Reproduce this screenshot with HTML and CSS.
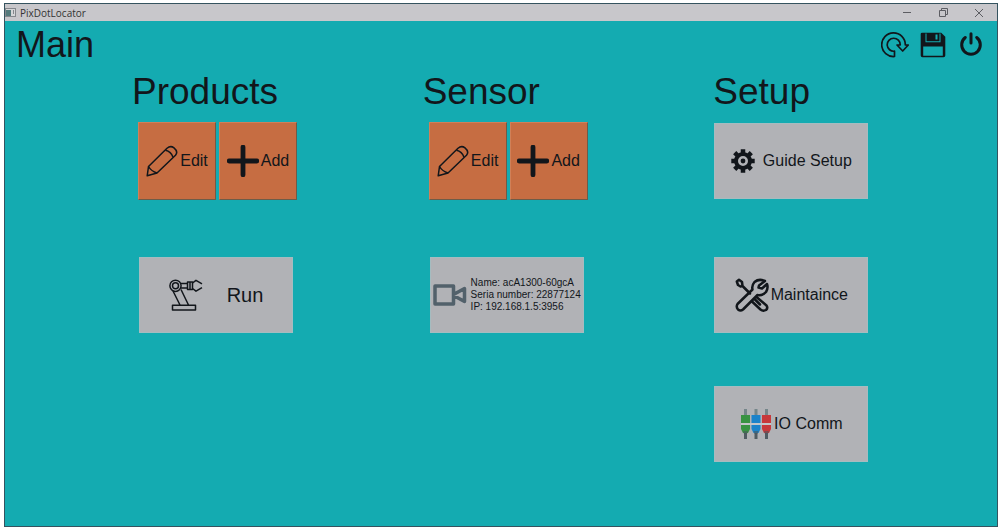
FILE: index.html
```html
<!DOCTYPE html>
<html lang="en">
<head>
  <meta charset="UTF-8">
  <meta name="viewport" content="width=device-width, initial-scale=1.0">
  <title>PixDotLocator</title>
  <link rel="stylesheet" href="styles.css">
</head>
<body>
  <!-- shared icons -->
  <svg class="defs" aria-hidden="true">
    <symbol id="pencil" viewBox="0 0 32 32">
      <g fill="none" stroke="currentColor" stroke-width="1.5" stroke-linejoin="round">
        <path d="M1.2 30.8 2.500 21.500 21 3.3Q24.5 .2 28 2.8Q32.500 6.500 29.500 10.200L11 28Z"/>
        <path d="M2.500 21.500Q5 26 11 28M19.500 5.300Q25 6.500 27 12.200"/>
      </g>
    </symbol>
    <symbol id="plus" viewBox="0 0 30 30">
      <path d="M15 2V28M2 15H28" fill="none" stroke="currentColor" stroke-width="4.500" stroke-linecap="round"/>
    </symbol>
  </svg>

  <div class="window">
    <header class="titlebar">
      <svg class="app-icon" viewBox="0 0 11 9">
        <rect x=".5" y=".5" width="10" height="8" fill="#d5d6d8" stroke="#85888d"/>
        <rect x="1" y="2" width="5" height="6" fill="#557a7c"/>
        <path d="M8.500 2V6" stroke="#85888d"/>
      </svg>
      <span class="app-name">PixDotLocator</span>
      <button class="win-btn" type="button" aria-label="Minimize">
        <svg viewBox="0 0 10 10"><path d="M1 4.500H9"/></svg>
      </button>
      <button class="win-btn" type="button" aria-label="Restore">
        <svg viewBox="0 0 10 10"><path d="M1.500 2.500H7.500V8.500H1.500ZM3.500 2.500V.5H9.500V6.500H7.500"/></svg>
      </button>
      <button class="win-btn" type="button" aria-label="Close">
        <svg viewBox="0 0 10 10"><path d="M1 1 9 9M9 1 1 9"/></svg>
      </button>
    </header>

    <div class="toolbar">
      <h1>Main</h1>
      <div class="tools">
        <button class="tool" type="button" aria-label="Refresh">
          <svg viewBox="0 0 28 26">
            <path d="M13.500 24.500A11.800 11.800 0 1 1 24.300 13H27.300L21.700 19 16 13H19.200A6.500 6.500 0 1 0 13.500 19.200Z" fill="none" stroke="currentColor" stroke-width="1.700" stroke-linejoin="round"/>
          </svg>
        </button>
        <button class="tool" type="button" aria-label="Save">
          <svg viewBox="0 0 28 26">
            <path fill="currentColor" fill-rule="evenodd" d="M3 .7H22.200L26.300 4.800V23.500Q26.300 25.300 24.500 25.300H3.500Q1.700 25.300 1.700 23.500V2Q1.700 .7 3 .7ZM4.200 14.500V23.700H23.800V14.500Z"/>
            <path fill="#14abb1" d="M6.500 1.500H7.500V9.300H20.500V1.500H21.500V10.300H6.500ZM16.500 2.500H18.500V7.500H16.500Z"/>
          </svg>
        </button>
        <button class="tool" type="button" aria-label="Power">
          <svg viewBox="0 0 28 26">
            <path d="M8.300 5.500A9.300 9.300 0 1 0 19.700 5.500M14 1.800V11" fill="none" stroke="currentColor" stroke-width="3" stroke-linecap="round"/>
          </svg>
        </button>
      </div>
    </div>

    <main class="columns">
      <section class="column">
        <h2>Products</h2>
        <div class="pair">
          <button class="btn orange" type="button"><svg class="icon"><use href="#pencil"/></svg>Edit</button>
          <button class="btn orange" type="button"><svg class="icon"><use href="#plus"/></svg>Add</button>
        </div>
        <button class="btn gray run" type="button">
          <svg class="icon-robot" viewBox="0 0 34 32">
            <g fill="none" stroke="currentColor" stroke-width="1.500" stroke-linejoin="round">
              <circle cx="6.500" cy="6.800" r="5.600"/>
              <circle cx="6.500" cy="6.800" r="3"/>
              <path d="M12 4.500H18.500M12 9H18.500M18.500 3H23.500V10.500H18.500ZM21 3V10.500"/>
              <path d="M23.500 4 27 1.300 33 4.800M23.500 9.500 27 12.200 33 8.700"/>
              <path d="M4 12 11 26M12 10.500 19.500 26M3.500 26.300H26.500V31H3.500Z"/>
            </g>
          </svg>
          Run
        </button>
      </section>

      <section class="column">
        <h2>Sensor</h2>
        <div class="pair">
          <button class="btn orange" type="button"><svg class="icon"><use href="#pencil"/></svg>Edit</button>
          <button class="btn orange" type="button"><svg class="icon"><use href="#plus"/></svg>Add</button>
        </div>
        <button class="btn gray camera" type="button">
          <svg class="icon-camera" viewBox="0 0 34 22">
            <path d="M2 2H20.500V20H2ZM20.500 10.500 31.500 4.500V17.500L20.500 11.500" fill="none" stroke="#52616b" stroke-width="3.500" stroke-linejoin="round"/>
          </svg>
          <span>Name: acA1300-60gcA<br>Seria number: 22877124<br>IP: 192.168.1.5:3956</span>
        </button>
      </section>

      <section class="column setup">
        <h2>Setup</h2>
        <button class="btn gray guide" type="button">
          <svg class="icon-gear" viewBox="0 0 24 24">
            <circle cx="12" cy="12" r="7" fill="none" stroke="currentColor" stroke-width="4"/>
            <circle cx="12" cy="12" r="2.400" fill="currentColor"/>
            <g stroke="currentColor" stroke-width="4.500">
              <path d="M12 .3V5M12 19V23.700M.3 12H5M19 12H23.700"/>
              <path d="M3.700 3.700 7 7M17 17 20.300 20.300M3.700 20.300 7 17M17 7 20.300 3.700"/>
            </g>
          </svg>
          Guide Setup
        </button>
        <button class="btn gray" type="button">
          <svg class="icon-tools" viewBox="0 0 34 34">
            <g fill="none" stroke="currentColor" stroke-width="2.500" stroke-linejoin="round" stroke-linecap="round">
              <path d="M1.800 3.500 4 1.800 7 4 7.500 8 5.500 8.500 3 7ZM7.500 8 15 15.500"/>
              <path d="M21.500 19 31.500 27.500Q33.200 30 31 32Q28 33.500 25.500 31.500L17 23.500M20 21.500 25 26.500"/>
              <path d="M30 3Q24 .3 19.500 4Q16.500 7.500 17.500 11.500L2.500 26Q.8 29 3 31.500Q5.500 33.500 8 31.500L22.500 17Q27.500 18 31 14Q33.500 10 32 6L27 10.500 23.500 9.500 24 7.500Z"/>
            </g>
          </svg>
          Maintaince
        </button>
        <button class="btn gray" type="button">
          <svg class="icon-io" viewBox="0 0 32 32">
            <path d="M5.500 1V7M16 1V7M26.500 1V7" stroke="#75868a" stroke-width="3"/>
            <path d="M5.500 24V31M16 24V31M26.500 24V31" stroke="#505b62" stroke-width="3"/>
            <path d="M1 7H10V15H1ZM1 17H10V21L8 25H3L1 21Z" fill="#389342"/>
            <path d="M11.500 7H20.500V15H11.500ZM11.500 17H20.500V21L18.500 25H13.500L11.500 21Z" fill="#1c83ca"/>
            <path d="M22 7H31V15H22ZM22 17H31V21L29 25H24L22 21Z" fill="#c7383b"/>
            <path d="M3 23H8L7 26H4ZM13.500 23H18.500L17.500 26H14.500ZM24 23H29L28 26H25Z" fill="#4b565e" opacity=".6"/>
            <path d="M1 16H31" stroke="#d8dadd"/>
          </svg>
          IO Comm
        </button>
      </section>
    </main>
  </div>
</body>
</html>
```
FILE: styles.css
```css
* {
  box-sizing: border-box;
}
body {
  margin: 0;
  padding: 3px 4px;
  background: #fff;
  color: #12161b;
  font-family: "Liberation Sans", Arial, sans-serif;
}
button {
  margin: 0;
  padding: 0;
  border: none;
  background: none;
  color: inherit;
  font: inherit;
  cursor: pointer;
}
.defs {
  display: none;
}
.window {
  min-height: calc(100vh - 6px);
  border: 1px solid #35535f;
  background: #14abb1;
}

/* title bar */
.titlebar {
  display: flex;
  align-items: center;
  height: 17px;
  background: #c8c7cb;
}
.app-icon {
  width: 11px;
  height: 9px;
}
.app-name {
  flex: 1;
  margin-left: 4px;
  color: #333;
  font-family: "Open Sans", sans-serif;
  font-size: 10px;
  line-height: 16px;
}
.win-btn {
  display: flex;
  align-items: center;
  justify-content: center;
  width: 36px;
  height: 16px;
}
.win-btn svg {
  width: 10px;
  height: 10px;
  fill: none;
  stroke: #5c5d62;
}

/* page header */
.toolbar {
  display: flex;
  align-items: center;
  justify-content: space-between;
  height: 48px;
  padding: 0 12px 0 11px;
}
h1,
h2 {
  margin: 0;
  font-weight: normal;
}
h1 {
  font-size: 36px;
}
.tools {
  display: flex;
  gap: 10px;
}
.tool svg {
  display: block;
  width: 28px;
  height: 26px;
}

/* button columns */
.columns {
  display: grid;
  grid-template-columns: repeat(3, 1fr);
  padding-left: 120px;
}
.column {
  display: flex;
  flex-direction: column;
  align-items: flex-start;
  padding-left: 14px;
}
.column h2 {
  margin: 0 0 7px -7px;
  font-size: 37px;
  line-height: 46px;
}
.pair {
  display: flex;
  gap: 3px;
  margin-left: -1px;
}
.btn {
  display: flex;
  align-items: center;
  justify-content: center;
  gap: 2px;
  font-size: 16px;
}
.orange {
  width: 78px;
  height: 78px;
  border: 1px solid #d08058;
  border-right-color: #6d5c48;
  border-bottom-color: #6d5c48;
  background: #c66d42;
}
.gray {
  width: 154px;
  height: 76px;
  border: 1px solid #a5bcc0;
  background: #b1b2b6;
}
.icon {
  width: 32px;
  height: 32px;
}
.run {
  gap: 24px;
  margin-top: 57px;
  font-size: 20px;
}
.icon-robot {
  width: 34px;
  height: 32px;
}
.camera {
  gap: 4px;
  margin-top: 57px;
  font-size: 10px;
  line-height: 12px;
  text-align: left;
}
.icon-camera {
  width: 34px;
  height: 22px;
}
.setup {
  padding-left: 8px;
}
.setup h2 {
  margin: 0 0 8px -1px;
}
.setup .btn + .btn {
  margin-top: 53px;
}
.setup .guide + .btn {
  margin-top: 58px;
}
.guide {
  gap: 8px;
}
.icon-gear {
  width: 24px;
  height: 24px;
}
.icon-tools {
  width: 34px;
  height: 34px;
}
.icon-io {
  width: 32px;
  height: 32px;
}
```
